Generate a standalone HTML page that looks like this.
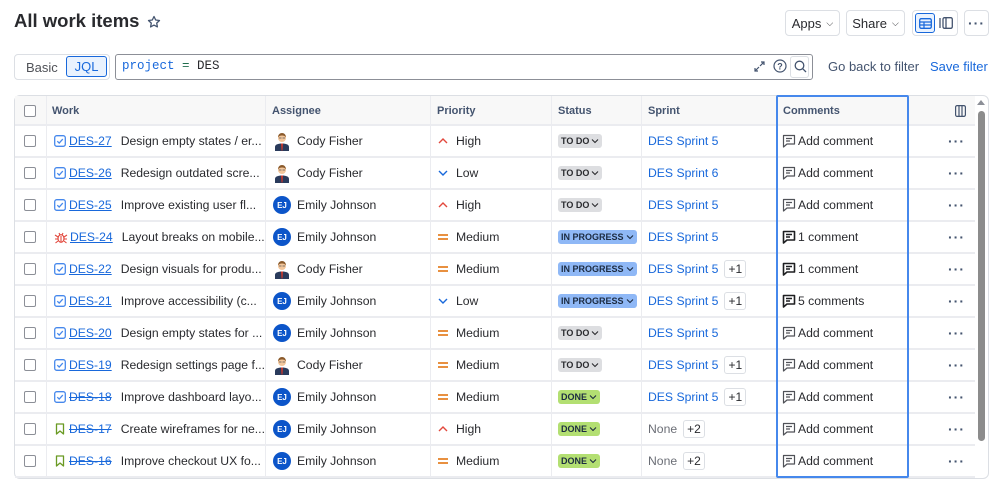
<!DOCTYPE html>
<html><head><meta charset="utf-8"><style>
*{box-sizing:border-box;margin:0;padding:0}
body{width:998px;height:478px;background:#fff;font-family:"Liberation Sans",sans-serif;color:#292a2e;position:relative;overflow:hidden;font-size:12px}
.a{position:absolute}
.btn{position:absolute;top:10px;height:26px;border:1px solid #dcdfe4;border-radius:4px;font-size:13px;display:flex;align-items:center;justify-content:center;color:#292a2e}
.hdr{position:absolute;top:96px;height:30px;left:15px;width:960px;background:#f8f8f8;border-bottom:2px solid #ebecf0}
.th{position:absolute;top:0;height:30px;line-height:30px;font-size:11px;font-weight:bold;color:#44546f;padding-left:6px}
.row{position:absolute;left:15px;width:960px;height:32px;border-bottom:2px solid #ebecf0}
.c{position:absolute;top:0;height:30px;display:flex;align-items:center;white-space:nowrap;font-size:12.2px}
.vl{position:absolute;top:96px;width:1px;height:382px;background:#ebecf0}
.cb{width:12px;height:12px;border:1.5px solid #8c8f97;border-radius:2px;background:#fff}
.key{color:#1868db;text-decoration:underline;margin-right:9px}
.key.s{text-decoration:line-through}
.lz{font-size:9px;font-weight:bold;border-radius:3px;padding:1px 3px;height:14px;display:flex;align-items:center;gap:2px}
.todo{background:#dddee1;color:#292a2e}
.ip{background:#8fb8f6;color:#1c2b41}
.done{background:#b3df72;color:#1c2b41}
.sp{color:#1868db}
.pl{border:1px solid #dcdfe4;border-radius:3px;padding:0 3px;height:18px;line-height:16px;margin-left:6px;font-size:12px}
.ej{width:18px;height:18px;border-radius:50%;background:#0c55c9;color:#fff;font-size:8px;font-weight:bold;display:flex;align-items:center;justify-content:center;margin-right:6px}
.dots{font-size:14px;letter-spacing:1px;color:#44546f;font-weight:bold}
</style></head><body>
<div class="a" style="left:14px;top:10px;font-size:18.5px;font-weight:bold;color:#292a2e">All work items</div>
<svg class="a" style="left:147px;top:15px" width="14" height="14" viewBox="0 0 14 14"><path d="M7 1.5l1.7 3.5 3.8.5-2.8 2.6.7 3.8L7 10.1 3.6 11.9l.7-3.8L1.5 5.5l3.8-.5z" fill="none" stroke="#44546f" stroke-width="1.3" stroke-linejoin="round"/></svg>
<div class="btn" style="left:785px;width:55px">Apps <span style="font-size:9px;margin-left:5px">&#x2335;</span></div>
<div class="btn" style="left:846px;width:59px">Share <span style="font-size:9px;margin-left:5px">&#x2335;</span></div>
<div class="btn" style="left:912px;width:46px;justify-content:flex-start;padding-left:2px">
 <div style="width:20px;height:20px;border:1px solid #1868db;background:#e9f2fe;border-radius:3px;display:flex;align-items:center;justify-content:center"><svg width="13" height="11"><rect x=".7" y=".7" width="11.6" height="9.6" rx="1.5" fill="none" stroke="#1868db" stroke-width="1.3"/><path d="M1 4h11M1 7h11M5 4v6" stroke="#1868db" stroke-width="1.2"/></svg></div>
 <svg style="margin-left:4px" width="14" height="12"><path d="M1 1v10" stroke="#44546f" stroke-width="1.3"/><rect x="4" y=".7" width="9.3" height="10.6" rx="1.5" fill="none" stroke="#44546f" stroke-width="1.3"/><path d="M7 1v10" stroke="#44546f" stroke-width="1.3"/></svg>
</div>
<div class="btn" style="left:964px;width:25px"><span class="dots">···</span></div>

<div class="a" style="left:14px;top:54px;width:96px;height:26px;border:1px solid #dcdfe4;border-radius:4px"></div>
<div class="a" style="left:26px;top:60px;color:#505258;font-size:13px">Basic</div>
<div class="a" style="left:66px;top:56px;width:41px;height:21px;border:1px solid #1868db;background:#e9f2fe;border-radius:3px;color:#1868db;text-align:center;line-height:19px;font-size:13px">JQL</div>
<div class="a" style="left:115px;top:54px;width:698px;height:26px;border:1px solid #8c8f97;border-radius:3px"></div>
<div class="a" style="left:122px;top:59px;font-family:'Liberation Mono',monospace;font-size:12.5px"><span style="color:#1868db">project</span> <span style="color:#216e4e">=</span> DES</div>
<svg class="a" style="left:753px;top:60px" width="13" height="13"><path d="M2 11l4-4M11 2L7 6M2 8v3h3M11 5V2H8" fill="none" stroke="#44546f" stroke-width="1.2"/></svg>
<svg class="a" style="left:773px;top:59px" width="14" height="14"><circle cx="7" cy="7" r="6" fill="none" stroke="#44546f" stroke-width="1.2"/><text x="7" y="10.5" font-size="9" text-anchor="middle" font-family="Liberation Sans" font-weight="bold" fill="#44546f">?</text></svg>
<div class="a" style="left:790px;top:56px;width:19px;height:22px;border:1px solid #dcdfe4;border-radius:3px"></div>
<svg class="a" style="left:794px;top:60px" width="13" height="13"><circle cx="5.5" cy="5.5" r="4.3" fill="none" stroke="#44546f" stroke-width="1.3"/><path d="M8.7 8.7L12 12" stroke="#44546f" stroke-width="1.3"/></svg>
<div class="a" style="left:828px;top:59px;color:#44546f;font-size:13px">Go back to filter</div>
<div class="a" style="left:930px;top:59px;color:#1868db;font-size:13px">Save filter</div>

<div class="a" style="left:14px;top:95px;width:975px;height:384px;border:1px solid #dcdfe4;border-radius:6px"></div>
<div class="hdr">
 <div class="th" style="left:9px;top:9px;height:12px;padding:0"><div class="cb"></div></div>
 <div class="th" style="left:31px">Work</div>
 <div class="th" style="left:251px">Assignee</div>
 <div class="th" style="left:416px">Priority</div>
 <div class="th" style="left:537px">Status</div>
 <div class="th" style="left:627px">Sprint</div>
 <div class="th" style="left:762px">Comments</div>
 <svg class="a" style="left:940px;top:9px" width="11" height="12"><rect x=".6" y=".6" width="9.8" height="10.8" rx="1.5" fill="none" stroke="#44546f" stroke-width="1.2"/><path d="M4 1v10M7 1v10" stroke="#44546f" stroke-width="1.2"/></svg>
</div>
<div class="vl" style="left:46px"></div><div class="vl" style="left:265px"></div><div class="vl" style="left:430px"></div><div class="vl" style="left:551px"></div><div class="vl" style="left:641px"></div>

<div id="rows"></div>
<script>
const task='<svg width="12" height="12" style="margin-right:3px"><rect x=".7" y=".7" width="10.6" height="10.6" rx="2" fill="none" stroke="#4688ec" stroke-width="1.3"/><path d="M3.3 6.2l1.9 1.9 3.6-4" fill="none" stroke="#4688ec" stroke-width="1.3"/></svg>';
const bug='<svg width="14" height="13" style="margin-right:2px"><ellipse cx="7" cy="7.5" rx="3" ry="3.8" fill="none" stroke="#e2483d" stroke-width="1.2"/><path d="M1 4l3 2M13 4l-3 2M1 8h3M13 8h-3M1.5 12l2.5-2M12.5 12l-2.5-2M5 2l1 2M9 2L8 4M7 5v6" stroke="#e2483d" stroke-width="1.1" fill="none"/></svg>';
const story='<svg width="12" height="12" style="margin-right:3px"><path d="M2.5 1h7v10L6 8l-3.5 3z" fill="none" stroke="#6a9a23" stroke-width="1.3" stroke-linejoin="round"/></svg>';
const cody='<svg width="18" height="20" style="margin-right:6px"><path d="M2 20v-4c0-2.5 3-3.5 7-3.5s7 1 7 3.5v4z" fill="#2a3b5c"/><path d="M8 12.5h2l-.5 7h-1z" fill="#c9372c"/><circle cx="9" cy="7" r="4" fill="#f3c79c"/><path d="M5 6.5c0-3 2-4.5 4-4.5s4 1.5 4 4.5c-1-1.5-2-2-4-2s-3 .5-4 2z" fill="#8a5a2b"/><path d="M6 7h2.5M9.5 7H12" stroke="#555" stroke-width=".8"/></svg>';
const ej='<div class="ej">EJ</div>';
const pr={High:'<svg width="12" height="8" style="margin-right:7px"><path d="M2 6l4-4 4 4" fill="none" stroke="#e2483d" stroke-width="1.4"/></svg>',
Low:'<svg width="12" height="8" style="margin-right:7px"><path d="M2 2l4 4 4-4" fill="none" stroke="#1868db" stroke-width="1.4"/></svg>',
Medium:'<svg width="12" height="8" style="margin-right:7px"><path d="M1 2h10M1 6h10" stroke="#e06c00" stroke-width="1.6"/></svg>'};
const ch='<svg width="8" height="6"><path d="M1 1.5l3 3 3-3" fill="none" stroke="currentColor" stroke-width="1.1"/></svg>';
const st={T:'<div class="lz todo">TO DO'+ch+'</div>',I:'<div class="lz ip">IN PROGRESS'+ch+'</div>',D:'<div class="lz done">DONE'+ch+'</div>'};
const cm0='<svg width="14" height="14" style="margin-right:2px"><path d="M1.5 1.5h11v8.5H5l-3.5 3z" fill="none" stroke="#505258" stroke-width="1.2" stroke-linejoin="round"/><path d="M4 4.5h6M4 7h4" stroke="#505258" stroke-width="1.2"/></svg>';
const cm1=cm0.replace(/#505258/g,'#1e1f21').replace(/1\.2/g,'1.6');
const R=[
['27',task,'Design empty states / er...',cody,'Cody Fisher','High','T','DES Sprint 5','','Add comment'],
['26',task,'Redesign outdated scre...',cody,'Cody Fisher','Low','T','DES Sprint 6','','Add comment'],
['25',task,'Improve existing user fl...',ej,'Emily Johnson','High','T','DES Sprint 5','','Add comment'],
['24',bug,'Layout breaks on mobile...',ej,'Emily Johnson','Medium','I','DES Sprint 5','','1 comment'],
['22',task,'Design visuals for produ...',cody,'Cody Fisher','Medium','I','DES Sprint 5','+1','1 comment'],
['21',task,'Improve accessibility (c...',ej,'Emily Johnson','Low','I','DES Sprint 5','+1','5 comments'],
['20',task,'Design empty states for ...',ej,'Emily Johnson','Medium','T','DES Sprint 5','','Add comment'],
['19',task,'Redesign settings page f...',cody,'Cody Fisher','Medium','T','DES Sprint 5','+1','Add comment'],
['18',task,'Improve dashboard layo...',ej,'Emily Johnson','Medium','D','DES Sprint 5','+1','Add comment'],
['17',story,'Create wireframes for ne...',ej,'Emily Johnson','High','D','None','+2','Add comment'],
['16',story,'Improve checkout UX fo...',ej,'Emily Johnson','Medium','D','None','+2','Add comment']];
let h='';
R.forEach((r,i)=>{const s=['18','17','16'].includes(r[0]);const add=r[9]=='Add comment';
h+=`<div class="row" style="top:${126+i*32}px">
<div class="c" style="left:9px"><div class="cb"></div></div>
<div class="c" style="left:39px">${r[1]}<span class="key${s?' s':''}">DES-${r[0]}</span>${r[2]}</div>
<div class="c" style="left:258px">${r[3]}${r[4]}</div>
<div class="c" style="left:422px">${pr[r[5]]}${r[5]}</div>
<div class="c" style="left:543px">${st[r[6]]}</div>
<div class="c" style="left:633px"><span class="sp" style="${r[7]=='None'?'color:#6b6e76':''}">${r[7]}</span>${r[8]?'<span class="pl">'+r[8]+'</span>':''}</div>
<div class="c" style="left:767px">${add?cm0:cm1}${r[9]}</div>
<div class="c" style="left:933px"><span class="dots">···</span></div></div>`;});
document.getElementById('rows').innerHTML=h;
</script>
<div class="a" style="left:776px;top:95px;width:133px;height:383px;border:2px solid #4688ec;border-radius:2px"></div>
<div class="a" style="left:977px;top:100px;width:0;height:0;border-left:4px solid transparent;border-right:4px solid transparent;border-bottom:5px solid #8c8f97"></div>
<div class="a" style="left:978px;top:111px;width:7px;height:330px;border-radius:4px;background:#8c8c8c"></div>
</body></html>
